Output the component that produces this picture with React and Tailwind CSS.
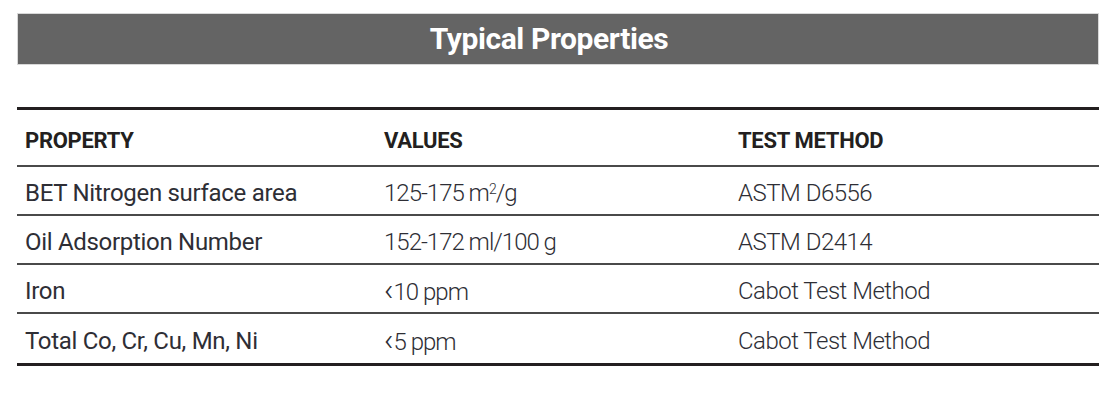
import React from 'react';

const Lt = () => <span className="text-[32px] leading-none relative top-[1px] mr-[1px]">‹</span>;

const rows = [
    { property: 'BET Nitrogen surface area', value: <>125-175 m<sup className="text-[14px]">2</sup>/g</>, method: 'ASTM D6556' },
    { property: 'Oil Adsorption Number', value: '152-172 ml/100 g', method: 'ASTM D2414' },
    { property: 'Iron', value: <><Lt />10 ppm</>, method: 'Cabot Test Method' },
    { property: 'Total Co, Cr, Cu, Mn, Ni', value: <><Lt />5 ppm</>, method: 'Cabot Test Method' },
];

const cols = 'grid grid-cols-[359px_354px_1fr]';

export default function App() {
    return (
        <div className="w-[1116px] h-[407px] bg-white px-[17px] pt-[13px]" style={{ fontFamily: 'Roboto, "Liberation Sans", sans-serif' }}>
            {/* Title bar */}
            <div className="h-[52px] bg-[#646464] border border-[#d8d8d8] flex items-center justify-center">
                <h1 className="text-white text-[30px] font-bold tracking-[-0.4px] leading-none mr-[18px]">Typical Properties</h1>
            </div>

            {/* Table */}
            <div className="mt-[42px] border-t-[3px] border-b-[3px] border-[#231f20]">
                <div className={`${cols} h-[57px] items-center border-b-2 border-[#4a4a4a] text-[#231f20] text-[22px] font-bold tracking-[-0.3px]`}>
                    <div className="pl-2 pt-[5px]">PROPERTY</div>
                    <div className="pl-2 pt-[5px]">VALUES</div>
                    <div className="pl-2 pt-[5px]">TEST METHOD</div>
                </div>
                {rows.map((row, i) => (
                    <div
                        key={i}
                        className={`${cols} h-[49px] items-center text-[#2e2e35] text-[24px] ${i < rows.length - 1 ? 'border-b-2 border-[#4a4a4a]' : ''}`}
                    >
                        <div className="pl-2 pt-[5px] tracking-[-0.3px]">{row.property}</div>
                        <div className="pl-2 pt-[5px] font-light tracking-[-1px]">{row.value}</div>
                        <div className="pl-2 pt-[5px] font-light tracking-[-0.5px]">{row.method}</div>
                    </div>
                ))}
            </div>
        </div>
    );
}
